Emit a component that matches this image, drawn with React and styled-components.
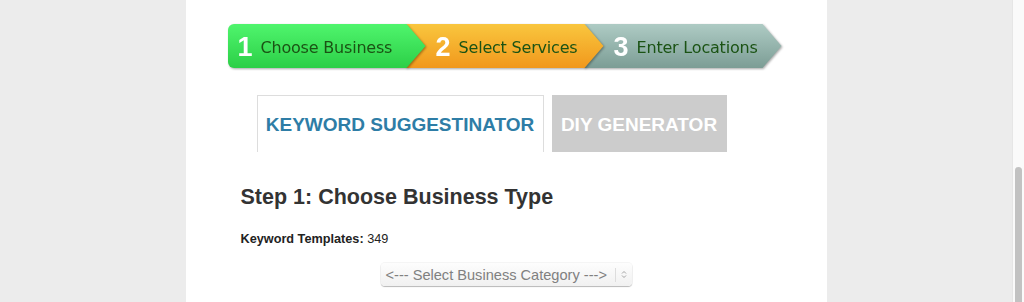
import React from 'react';
import styled, { createGlobalStyle } from 'styled-components';

const GlobalStyle = createGlobalStyle`
  html, body {
    margin: 0;
    padding: 0;
    background: #ececec;
    font-family: "Liberation Sans", Arial, sans-serif;
  }
`;

const Page = styled.div`
  display: flex;
  height: 302px;
  overflow: hidden;
`;

const Main = styled.div`
  flex: 1;
  display: flex;
  justify-content: center;
`;

const Column = styled.div`
  width: 641px;
  background: #fff;
  display: flex;
  flex-direction: column;
`;

const ScrollTrack = styled.div`
  width: 12px;
  background: #fafafa;
  border-left: 1px solid #e6e6e6;
  box-sizing: border-box;
  padding: 167px 2px 0 2px;
`;

const ScrollThumb = styled.div`
  height: 200px;
  background: #c2c2c2;
  border-radius: 4px;
`;

const Stepper = styled.div`
  display: flex;
  margin: 24px 0 0 42px;
  height: 44px;
`;

const StepWrap = styled.div`
  width: 198px;
  height: 44px;
  margin-left: ${(p) => (p.$first ? '0' : '-20px')};
  z-index: ${(p) => p.$z};
  filter: drop-shadow(1px 1px 1px rgba(0, 0, 0, 0.35));
`;

const Step = styled.div`
  height: 100%;
  display: flex;
  align-items: center;
  box-sizing: border-box;
  padding: 2px 0 0 ${(p) => (p.$first ? '10px' : '30px')};
  background: ${(p) => p.$bg};
  border-radius: ${(p) => (p.$first ? '6px 0 0 6px' : '0')};
  clip-path: polygon(0 0, calc(100% - 19px) 0, 100% 50%, calc(100% - 19px) 100%, 0 100%);
`;

const StepNum = styled.span`
  font-family: "Liberation Sans", Arial, sans-serif;
  font-weight: bold;
  font-size: 27px;
  color: #fff;
  margin-right: 8px;
  line-height: 1;
`;

const StepLabel = styled.span`
  font-family: "DejaVu Sans", Verdana, sans-serif;
  font-size: 16px;
  letter-spacing: -0.2px;
  color: #1b5314;
`;

const Tabs = styled.div`
  display: flex;
  gap: 8px;
  margin: 27px 0 0 71px;
`;

const Tab = styled.div`
  height: 57px;
  box-sizing: border-box;
  display: flex;
  align-items: center;
  justify-content: center;
  width: ${(p) => p.$w}px;
  background: ${(p) => (p.$active ? '#fff' : '#cccccc')};
  border: ${(p) => (p.$active ? '1px solid #dddddd' : 'none')};
  border-bottom: none;
  color: ${(p) => (p.$active ? '#2e7da6' : '#fff')};
  font-weight: bold;
  font-size: 19px;
  padding-top: 2px;
`;

const Body = styled.div`
  padding: 0 55px;
`;

const Heading = styled.h2`
  margin: 33px 0 0 0;
  font-size: 21.5px;
  font-weight: bold;
  color: #333;
`;

const Meta = styled.p`
  margin: 22px 0 0 0;
  font-size: 12.7px;
  color: #222;
  b {
    font-weight: bold;
  }
`;

const SelectRow = styled.div`
  display: flex;
  justify-content: center;
  margin-top: 17px;
`;

const FakeSelect = styled.div`
  width: 251px;
  height: 23px;
  box-sizing: border-box;
  display: flex;
  align-items: center;
  padding-left: 5px;
  border-radius: 4px;
  background: linear-gradient(#fdfdfd, #f1f1f1);
  box-shadow: 0 1px 1px rgba(0, 0, 0, 0.25), 0 0 0 1px rgba(0, 0, 0, 0.04);
  font-size: 14.6px;
  color: #808080;
`;

const SelectText = styled.span`
  flex: 1;
  white-space: nowrap;
`;

const Arrows = styled.span`
  width: 16px;
  height: 14px;
  border-left: 1px solid #ddd;
  display: flex;
  align-items: center;
  justify-content: center;
`;

const steps = [
  { n: 1, label: 'Choose Business', bg: 'linear-gradient(#4ff56d, #2ccf47)' },
  { n: 2, label: 'Select Services', bg: 'linear-gradient(#f9c63e, #f1981c)' },
  { n: 3, label: 'Enter Locations', bg: 'linear-gradient(#aecbc4, #7c9d95)' },
];

export default function App() {
  return (
    <>
      <GlobalStyle />
      <Page>
        <Main>
          <Column>
            <Stepper>
              {steps.map((s, i) => (
                <StepWrap key={s.n} $first={i === 0} $z={3 - i}>
                  <Step $first={i === 0} $bg={s.bg}>
                    <StepNum>{s.n}</StepNum>
                    <StepLabel>{s.label}</StepLabel>
                  </Step>
                </StepWrap>
              ))}
            </Stepper>
            <Tabs>
              <Tab $active $w={287}>KEYWORD SUGGESTINATOR</Tab>
              <Tab $w={175}>DIY GENERATOR</Tab>
            </Tabs>
            <Body>
              <Heading>Step 1: Choose Business Type</Heading>
              <Meta>
                <b>Keyword Templates:</b> 349
              </Meta>
              <SelectRow>
                <FakeSelect>
                  <SelectText>&lt;--- Select Business Category ---&gt;</SelectText>
                  <Arrows>
                    <svg width="6" height="9" viewBox="0 0 6 9">
                      <path d="M1 3.5 L3 1.5 L5 3.5 M1 5.5 L3 7.5 L5 5.5" fill="none" stroke="#999" strokeWidth="0.9" />
                    </svg>
                  </Arrows>
                </FakeSelect>
              </SelectRow>
            </Body>
          </Column>
        </Main>
        <ScrollTrack>
          <ScrollThumb />
        </ScrollTrack>
      </Page>
    </>
  );
}
